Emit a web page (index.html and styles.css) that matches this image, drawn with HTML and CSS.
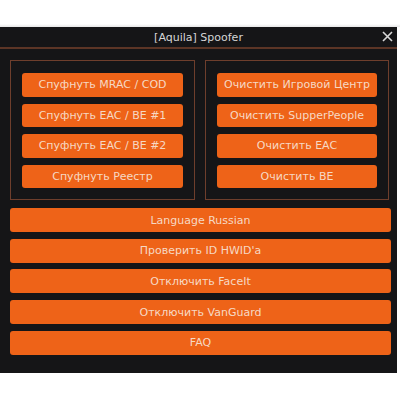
FILE: index.html
```html
<!DOCTYPE html>
<html>
<head>
<meta charset="utf-8">
<link rel="stylesheet" href="styles.css">
</head>
<body>
<div class="top"></div>
<div class="window">
  <div class="titlebar">
    <span class="title">[Aquila] Spoofer</span>
    <span class="close">
      <svg width="11" height="11" viewBox="0 0 11 11"><path d="M1 1L10 10M10 1L1 10" stroke="#d8d8d8" stroke-width="1.6"/></svg>
    </span>
  </div>
  <div class="content">
    <div class="groups">
      <div class="group">
        <div class="btn">Спуфнуть MRAC / COD</div>
        <div class="btn">Спуфнуть EAC / BE #1</div>
        <div class="btn">Спуфнуть EAC / BE #2</div>
        <div class="btn">Спуфнуть Реестр</div>
      </div>
      <div class="group">
        <div class="btn">Очистить Игровой Центр</div>
        <div class="btn">Очистить SupperPeople</div>
        <div class="btn">Очистить EAC</div>
        <div class="btn">Очистить BE</div>
      </div>
    </div>
    <div class="list">
      <div class="btn">Language Russian</div>
      <div class="btn">Проверить ID HWID'a</div>
      <div class="btn">Отключить FaceIt</div>
      <div class="btn">Отключить VanGuard</div>
      <div class="btn">FAQ</div>
    </div>
  </div>
</div>
</body>
</html>
```
FILE: styles.css
```css
html, body { margin: 0; padding: 0; background: #ffffff; }
body { width: 400px; height: 400px; overflow: hidden; font-family: "DejaVu Sans", Verdana, sans-serif; }
.top { height: 27px; background: linear-gradient(#ffffff 0, #ffffff 24px, #e6e6e6 27px); }
.window { width: 397px; height: 346px; background: #151517; box-sizing: border-box; }
.titlebar { height: 20px; border-bottom: 2px solid #5c3526; display: flex; align-items: center; justify-content: center; position: relative; }
.title { color: #d6d6d6; font-size: 11px; }
.close { position: absolute; right: 4px; top: 4px; display: flex; }
.content { padding: 11px 7px 0 10px; }
.groups { display: flex; gap: 10px; }
.group { width: 185px; height: 140px; box-sizing: border-box; border: 1px solid #6e3e2c; padding: 12px 11px 0 11px; display: flex; flex-direction: column; gap: 7px; }
.group .btn { height: 23.5px; }
.btn { background: #ee6318; color: #f6d9c4; border-radius: 3px; font-size: 11px; display: flex; align-items: center; justify-content: center; white-space: nowrap; }
.list { margin-top: 8px; width: 381px; display: flex; flex-direction: column; gap: 6.7px; }
.list .btn { height: 24px; }
.group:last-child { width: 184px; }
```
